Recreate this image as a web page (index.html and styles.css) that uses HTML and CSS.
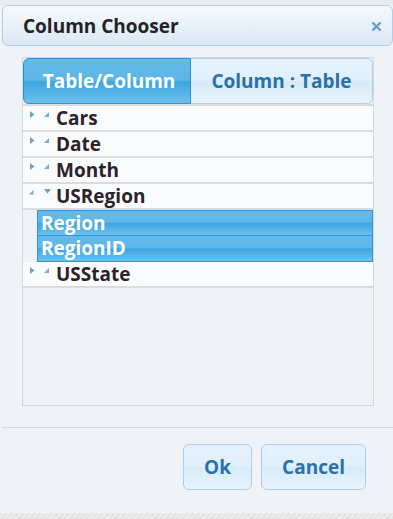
FILE: index.html
```html
<!DOCTYPE html>
<html>
<head>
<meta charset="utf-8">
<link rel="stylesheet" href="styles.css">
</head>
<body>
<div class="page">
  <div class="topstrip"></div>
  <div class="header">
    <span class="title">Column Chooser</span>
    <svg class="close" width="9" height="9" viewBox="0 0 9 9"><path d="M1 1 L8 8 M8 1 L1 8" stroke="#6c9fcd" stroke-width="2.4" stroke-linecap="square"/></svg>
  </div>
  <div class="panel">
    <div class="tabs">
      <div class="tab tab-active">Table/Column</div>
      <div class="tab tab-idle">Column : Table</div>
    </div>
    <div class="tree">
      <div class="row">
        <svg class="exp" width="5" height="7" viewBox="0 0 5 7"><path d="M0 0 L4.5 3.5 L0 7 Z" fill="#6ea1d1"/></svg>
        <svg class="ico" width="5" height="5" viewBox="0 0 5 5"><path d="M5 0 L5 5 L0 5 Z" fill="#79a9d6"/></svg>
        <span class="label">Cars</span>
      </div>
      <div class="row">
        <svg class="exp" width="5" height="7" viewBox="0 0 5 7"><path d="M0 0 L4.5 3.5 L0 7 Z" fill="#6ea1d1"/></svg>
        <svg class="ico" width="5" height="5" viewBox="0 0 5 5"><path d="M5 0 L5 5 L0 5 Z" fill="#79a9d6"/></svg>
        <span class="label">Date</span>
      </div>
      <div class="row">
        <svg class="exp" width="5" height="7" viewBox="0 0 5 7"><path d="M0 0 L4.5 3.5 L0 7 Z" fill="#6ea1d1"/></svg>
        <svg class="ico" width="5" height="5" viewBox="0 0 5 5"><path d="M5 0 L5 5 L0 5 Z" fill="#79a9d6"/></svg>
        <span class="label">Month</span>
      </div>
      <div class="row">
        <svg class="exp exp-open" width="5" height="5" viewBox="0 0 5 5"><path d="M4.5 0 L4.5 4.5 L0 4.5 Z" fill="#79a9d6"/></svg>
        <svg class="ico ico-open" width="7" height="5" viewBox="0 0 7 5"><path d="M0 0 L7 0 L3.5 4.5 Z" fill="#6ea1d1"/></svg>
        <span class="label label-open">USRegion</span>
      </div>
      <div class="row row-sel"><span class="label">Region</span></div>
      <div class="row row-sel row-sel-next"><span class="label">RegionID</span></div>
      <div class="row">
        <svg class="exp" width="5" height="7" viewBox="0 0 5 7"><path d="M0 0 L4.5 3.5 L0 7 Z" fill="#6ea1d1"/></svg>
        <svg class="ico" width="5" height="5" viewBox="0 0 5 5"><path d="M5 0 L5 5 L0 5 Z" fill="#79a9d6"/></svg>
        <span class="label">USState</span>
      </div>
    </div>
  </div>
  <div class="footer">
    <button class="btn btn-ok">Ok</button>
    <button class="btn btn-cancel">Cancel</button>
  </div>
  <div class="bottomstrip"></div>
</div>
</body>
</html>
```
FILE: styles.css
```css
html, body {
  margin: 0;
  padding: 0;
}
body {
  background: #eff3f7;
  font-family: "Open Sans", "Liberation Sans", sans-serif;
  font-weight: 700;
}
.page {
  width: 393px;
  height: 519px;
  display: flex;
  flex-direction: column;
  overflow: hidden;
}
.topstrip {
  height: 5px;
  background: #e9ecef;
  flex: none;
}
.header {
  flex: none;
  height: 41px;
  box-sizing: border-box;
  margin-left: 2px;
  border: 1px solid #aed0ec;
  border-radius: 6px;
  background: linear-gradient(#f5f9fd, #dbe8f5);
  display: flex;
  align-items: center;
  justify-content: space-between;
  padding: 0 11px 0 20px;
}
.title {
  font-size: 19px;
  color: #232323;
}
.close {
  display: block;
  margin-top: 2px;
}
.panel {
  flex: none;
  margin: 11px 19px 0 22px;
  height: 349px;
  box-sizing: border-box;
  border: 1px solid #d6d9dc;
  display: flex;
  flex-direction: column;
}
.tabs {
  display: flex;
  height: 46px;
  flex: none;
}
.tab {
  box-sizing: border-box;
  display: flex;
  align-items: center;
  justify-content: center;
  font-size: 19px;
  padding-bottom: 1px;
}
.tab-active {
  width: 168px;
  border: 1px solid #2d8fda;
  border-radius: 6px 0 0 6px;
  color: #ffffff;
  background: linear-gradient(#64bae9 0%, #5cb6e7 48%, #3fa5df 52%, #6cc1ec 100%);
  padding-left: 4px;
}
.tab-idle {
  flex: 1;
  border: 1px solid #a9cfec;
  border-left: none;
  border-radius: 0 6px 6px 0;
  color: #2872a8;
  background: linear-gradient(#e6f2fc 0%, #e1effb 48%, #d6eaf8 52%, #e9f4fd 100%);
}
.tree {
  border-top: 2px solid #dcdcdc;
  display: flex;
  flex-direction: column;
}
.row {
  height: 24px;
  border-bottom: 2px solid #dcdcdc;
  background: #f9fbfd;
  display: flex;
  align-items: flex-start;
  padding-left: 7px;
  color: #2b2328;
  font-size: 19px;
  line-height: 24px;
}
.exp {
  margin-top: 5px;
  flex: none;
}
.ico {
  margin-top: 6px;
  margin-left: 9px;
  flex: none;
}
.exp-open {
  margin-top: 6px;
  margin-left: -1px;
}
.ico-open {
  margin-top: 5px;
  margin-left: 10px;
}
.label {
  margin-left: 7px;
}
.label-open {
  margin-left: 5px;
}
.row-sel {
  margin-left: 14px;
  height: 24px;
  border: 1px solid #2f94e6;
  padding-left: 3px;
  color: #ffffff;
  background: linear-gradient(#62baea 0%, #60b8e9 45%, #3fa6df 52%, #6ec2ec 100%);
}
.row-sel .label {
  margin-left: 0;
}
.row-sel-next {
  border-top: none;
  height: 25px;
}
.footer {
  flex: none;
  margin-top: 21px;
  margin-left: 2px;
  border-top: 1px solid #d5d9dd;
  height: 86px;
  display: flex;
  justify-content: flex-end;
  align-items: flex-start;
  padding: 16px 27px 0 0;
  gap: 9px;
  box-sizing: border-box;
}
.btn {
  font-family: "Open Sans", "Liberation Sans", sans-serif;
  font-weight: 700;
  font-size: 19px;
  color: #2872a8;
  height: 46px;
  border: 1px solid #a9cfec;
  border-radius: 6px;
  background: linear-gradient(#e6f2fc 0%, #e1effb 48%, #d6eaf8 52%, #e9f4fd 100%);
  padding: 0;
  margin: 0;
}
.btn-ok {
  width: 69px;
}
.btn-cancel {
  width: 105px;
}
.bottomstrip {
  flex: 1;
  background: repeating-linear-gradient(135deg, #e4e4e4 0 2px, #ececec 2px 4px);
}
```
